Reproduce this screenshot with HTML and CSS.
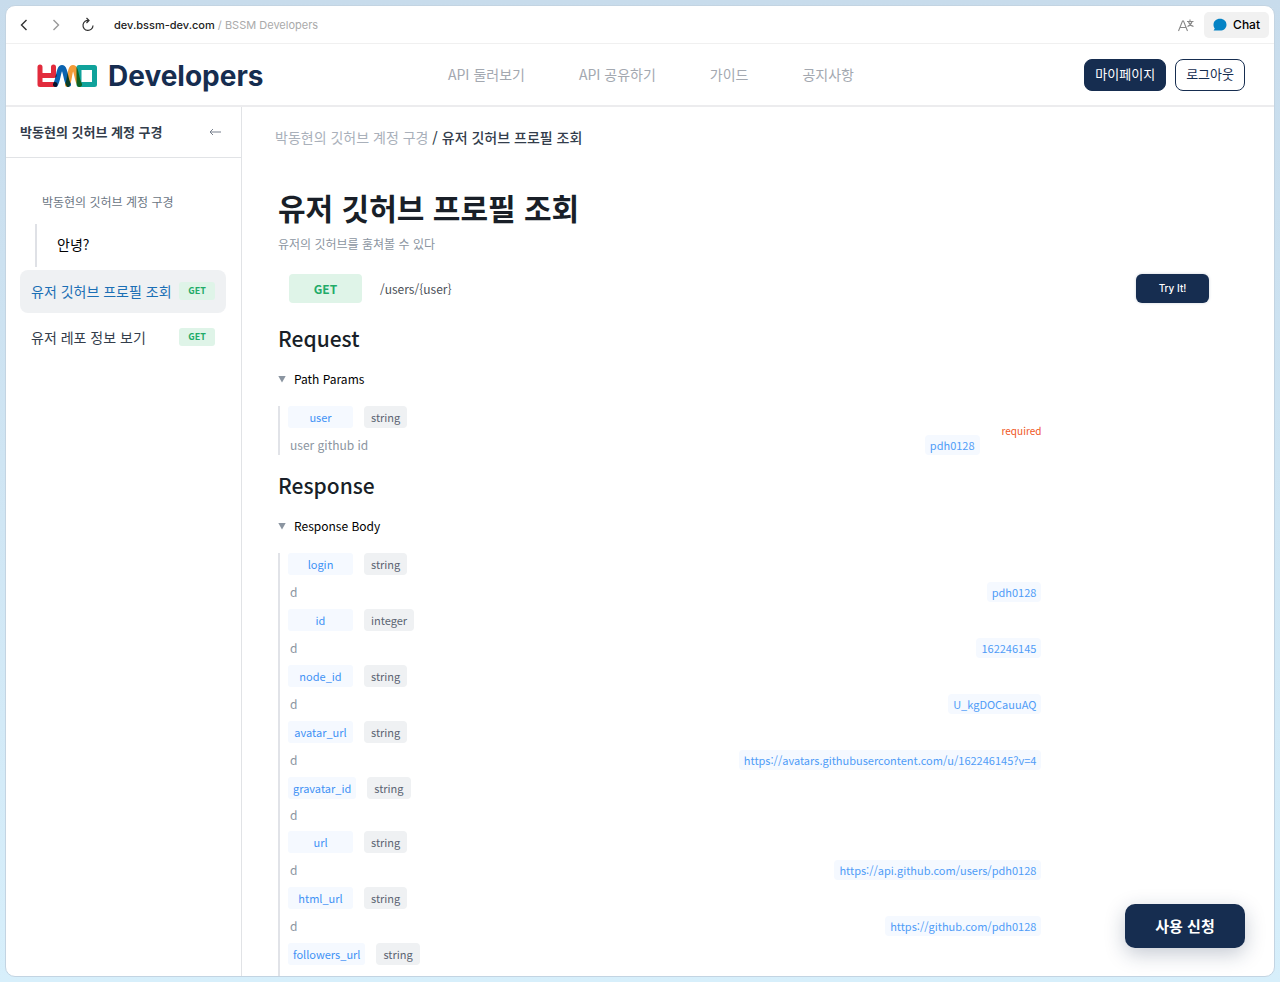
FILE: index.html
```html
<!DOCTYPE html>
<html lang="ko">
<head>
    <meta charset="UTF-8">
    <meta name="viewport" content="width=device-width, initial-scale=1.0">
    <title>BSSM Developers</title>
    <link rel="stylesheet" href="styles.css">
</head>
<body>
    <div class="window">
        <div class="browser-bar">
            <button class="icon-btn" aria-label="Back">
                <svg width="16" height="16" viewBox="0 0 16 16" stroke-width="1.4"><path d="M10.500 3L5.500 8l5 5" stroke="#333"/></svg>
            </button>
            <button class="icon-btn" aria-label="Forward">
                <svg width="16" height="16" viewBox="0 0 16 16" stroke-width="1.4"><path d="M5.500 3l5 5-5 5" stroke="#999"/></svg>
            </button>
            <button class="icon-btn" aria-label="Reload">
                <svg width="16" height="16" viewBox="0 0 16 16" stroke-width="1.2"><path d="M9 3.500A5 5 0 1 0 13 8.500M6.500 1l2.500 2.500L6.500 6" stroke="#333"/></svg>
            </button>
            <p class="address"><span class="host">dev.bssm-dev.com</span> / BSSM Developers</p>
            <button class="icon-btn translate" aria-label="Translate">
                <svg width="16" height="16" viewBox="0 0 16 16" stroke-width="1.1"><path d="M.5 14L4.500 4h1L9.500 14M2 10.500h6M9 4.500h6.500M12 2.500v2M9.500 9.500c2.500-1 4-3 4.500-5M10.500 4.500c.5 2 2.500 4 5 5" stroke="#888"/></svg>
            </button>
            <button class="chat-btn">
                <svg width="14" height="14" viewBox="0 0 14 14"><path d="M7 .8c3.800 0 6.500 2.500 6.500 5.900S10.800 12.600 7 12.600H.6l1.200-2C.9 9.500.5 8.200.5 6.700.5 3.300 3.200.8 7 .8z" fill="#0583c5"/></svg>
                Chat
            </button>
        </div>

        <header class="header">
            <a class="logo" href="#">
                <svg class="mark" width="60" height="24" viewBox="0 0 60 24" stroke-width="5" stroke-linejoin="round" stroke-linecap="round">
                    <path d="M3 3v17.500h15M3 11.500h14M16.500 3v8.500" stroke="#e22b3c"/>
                    <path d="M18.500 20.500C21.500 16 21.500 3.500 25 3.500s3.500 12.500 6.500 17" stroke="#0a63b0"/>
                    <path d="M30.500 20.500C33 16 32.500 3.500 36 3.500s3.500 12.500 6.500 17" stroke="#f29b38"/>
                    <path d="M42 3.500h15.500v17H42z" stroke="#10a29b"/>
                </svg>
                Developers
            </a>
            <nav class="menu">
                <a href="#">API 둘러보기</a>
                <a href="#">API 공유하기</a>
                <a href="#">가이드</a>
                <a href="#">공지사항</a>
            </nav>
            <div class="account">
                <button class="btn btn-dark">마이페이지</button>
                <button class="btn btn-line">로그아웃</button>
            </div>
        </header>

        <div class="body">
            <aside class="sidebar">
                <div class="sidebar-top">
                    <strong>박동현의 깃허브 계정 구경</strong>
                    <button class="fold" aria-label="접기">
                        <svg width="12" height="8" viewBox="0 0 12 8"><path d="M12 4H1M4 1L1 4l3 3" stroke="#777f8c"/></svg>
                    </button>
                </div>
                <div class="sidebar-list">
                    <p class="group">박동현의 깃허브 계정 구경</p>
                    <a class="child" href="#">안녕?</a>
                    <a class="item active" href="#">유저 깃허브 프로필 조회 <span class="method-sm">GET</span></a>
                    <a class="item" href="#">유저 레포 정보 보기 <span class="method-sm">GET</span></a>
                </div>
            </aside>

            <main class="content">
                <p class="crumbs"><a href="#">박동현의 깃허브 계정 구경</a> / 유저 깃허브 프로필 조회</p>

                <h1>유저 깃허브 프로필 조회</h1>
                <p class="summary">유저의 깃허브를 훔쳐볼 수 있다</p>

                <div class="endpoint">
                    <span class="method">GET</span>
                    <span class="path">/users/{user}</span>
                    <button class="try">Try It!</button>
                </div>

                <h2>Request</h2>
                <details open>
                    <summary>Path Params</summary>
                    <div class="params">
                        <div class="param">
                            <div class="info">
                                <div class="head"><span class="name">user</span><span class="type">string</span></div>
                                <div class="desc">user github id <span class="value">pdh0128</span></div>
                            </div>
                            <span class="required">required</span>
                        </div>
                    </div>
                </details>

                <h2>Response</h2>
                <details open>
                    <summary>Response Body</summary>
                    <div class="params">
                        <div class="param">
                            <div class="info">
                                <div class="head"><span class="name">login</span><span class="type">string</span></div>
                                <div class="desc">d <span class="value">pdh0128</span></div>
                            </div>
                        </div>
                        <div class="param">
                            <div class="info">
                                <div class="head"><span class="name">id</span><span class="type">integer</span></div>
                                <div class="desc">d <span class="value">162246145</span></div>
                            </div>
                        </div>
                        <div class="param">
                            <div class="info">
                                <div class="head"><span class="name">node_id</span><span class="type">string</span></div>
                                <div class="desc">d <span class="value">U_kgDOCauuAQ</span></div>
                            </div>
                        </div>
                        <div class="param">
                            <div class="info">
                                <div class="head"><span class="name">avatar_url</span><span class="type">string</span></div>
                                <div class="desc">d <span class="value">https://avatars.githubusercontent.com/u/162246145?v=4</span></div>
                            </div>
                        </div>
                        <div class="param">
                            <div class="info">
                                <div class="head"><span class="name">gravatar_id</span><span class="type">string</span></div>
                                <div class="desc">d</div>
                            </div>
                        </div>
                        <div class="param">
                            <div class="info">
                                <div class="head"><span class="name">url</span><span class="type">string</span></div>
                                <div class="desc">d <span class="value">https://api.github.com/users/pdh0128</span></div>
                            </div>
                        </div>
                        <div class="param">
                            <div class="info">
                                <div class="head"><span class="name">html_url</span><span class="type">string</span></div>
                                <div class="desc">d <span class="value">https://github.com/pdh0128</span></div>
                            </div>
                        </div>
                        <div class="param">
                            <div class="info">
                                <div class="head"><span class="name">followers_url</span><span class="type">string</span></div>
                            </div>
                        </div>
                    </div>
                </details>
            </main>
        </div>

        <button class="apply">사용 신청</button>
    </div>
</body>
</html>
```
FILE: styles.css
```css
*{
    box-sizing: border-box;
}

body{
    margin: 0;
    height: 100vh;
    padding: 5px;
    background: linear-gradient(#c8dcec, #d7effb);
    font-family: "Noto Sans CJK KR", sans-serif;
    font-size: 14px;
    line-height: 20px;
    color: #191f28;
}
p, h1, h2{
    margin: 0;
}
a{
    color: inherit;
    text-decoration: none;
}
button{
    border: 0;
    padding: 0;
    background: none;
    font: inherit;
    cursor: pointer;
}
svg{
    display: block;
    fill: none;
}

.window{
    position: relative;
    display: flex;
    flex-direction: column;
    height: 100%;
    border: 1px solid #c3d4e2;
    border-radius: 10px;
    background: #fff;
    overflow: hidden;
}

/* browser bar */
.browser-bar{
    display: flex;
    align-items: center;
    flex: none;
    height: 38px;
    padding: 0 5px 0 10px;
    gap: 16px;
    border-bottom: 1px solid #f0f0f0;
    font-family: Inter, sans-serif;
    font-size: 12px;
}
.address{
    flex: 1;
    color: #aaa;
    margin-left: 2px;
    font-size: 11px;
}
.host{
    color: #222;
    font-weight: 500;
}
.translate{
    margin-right: -6px;
}
.chat-btn{
    display: flex;
    align-items: center;
    gap: 6px;
    height: 26px;
    padding: 0 9px;
    border-radius: 5px;
    background: #f1f1f1;
    font-weight: 500;
}

/* header */
.header{
    display: grid;
    grid-template-columns: 1fr auto 1fr;
    align-items: center;
    flex: none;
    height: 63px;
    padding: 0 29px 0 31px;
    border-bottom: 2px solid #ececee;
}
.logo{
    display: flex;
    align-items: center;
    gap: 11px;
    padding-top: 2px;
    font-family: Inter, sans-serif;
    font-size: 28px;
    font-weight: 700;
    color: #162d50;
}
.mark{
    isolation: isolate;
}
.mark path{
    mix-blend-mode: multiply;
}
.menu{
    display: flex;
    gap: 54px;
    margin: 0 0 2px 20px;
    color: #a3a8b0;
}
.account{
    display: flex;
    justify-content: flex-end;
    gap: 9px;
}
.btn{
    height: 32px;
    padding: 0 10px 2px;
    border-radius: 8px;
    border: 1px solid #162d50;
    font-size: 13px;
}
.btn-dark{
    background: #162d50;
    color: #fff;
}
.btn-line{
    background: #fff;
    color: #162d50;
}

.body{
    display: flex;
    flex: 1;
    min-height: 0;
}

/* sidebar */
.sidebar{
    flex: none;
    width: 236px;
    border-right: 1px solid #e1e3e6;
}
.sidebar-top{
    display: flex;
    align-items: center;
    justify-content: space-between;
    height: 51px;
    padding: 0 20px 0 14px;
    border-bottom: 1px solid #e1e3e6;
    font-size: 13px;
    color: #333d4b;
}
.sidebar-list{
    display: flex;
    flex-direction: column;
    padding: 34px 15px 34px 14px;
}
.group{
    padding: 0 22px;
    font-size: 12px;
    color: #6b7684;
}
.child{
    margin: 12px 0 3px 15px;
    padding: 10px 20px 13px;
    border-left: 2px solid #dfe1e6;
    color: #000;
}
.item{
    display: flex;
    align-items: center;
    justify-content: space-between;
    height: 43px;
    margin-bottom: 3px;
    padding: 0 11px 1px;
    border-radius: 8px;
    color: #333d4b;
}
.item.active{
    background: #eff1f3;
    color: #1b6fb5;
}
.method-sm{
    width: 36px;
    border-radius: 3px;
    background: #dff4e8;
    color: #22ab68;
    font-size: 9px;
    line-height: 18px;
    font-weight: 700;
    text-align: center;
}

/* content */
.content{
    flex: 1;
    min-width: 0;
    padding: 20px 65px 0 36px;
    overflow: hidden;
}
.crumbs{
    margin: 0 -3px 38px;
    color: #333d4b;
    font-weight: 500;
}
.crumbs a{
    color: #a9b0ba;
    font-weight: 400;
}
h1{
    font-size: 30px;
    line-height: 44px;
    font-weight: 700;
}
.summary{
    margin-top: 5px;
    font-size: 12px;
    color: #8b95a1;
}
.endpoint{
    display: flex;
    align-items: center;
    gap: 18px;
    margin: 20px 0 19px 11px;
}
.method{
    width: 73px;
    border-radius: 4px;
    background: #dff4e8;
    color: #22ab68;
    font-size: 12px;
    line-height: 29px;
    font-weight: 700;
    text-align: center;
}
.path{
    flex: 1;
    font-size: 12px;
    color: #4b5058;
}
.try{
    width: 73px;
    height: 29px;
    padding-bottom: 1px;
    border-radius: 6px;
    background: #162d50;
    color: #fff;
    font-family: Inter, sans-serif;
    font-size: 10px;
    font-weight: 500;
    box-shadow: 0 0 3px #ccd2da;
}
h2{
    font-size: 21px;
    line-height: 32px;
    font-weight: 500;
}
summary{
    display: flex;
    align-items: center;
    gap: 8px;
    margin: 15px 0 17px;
    font-size: 12px;
    color: #000;
    cursor: pointer;
}
summary::before{
    content: "";
    width: 8px;
    height: 7px;
    background: #8b95a1;
    clip-path: polygon(0 0, 100% 0, 50% 100%);
}
.params{
    display: flex;
    flex-direction: column;
    gap: 7px;
    width: 82%;
    margin-bottom: 14px;
    padding-left: 8px;
    border-left: 2px solid #e1e3e8;
}
.param{
    display: flex;
    align-items: center;
    min-height: 47px;
    gap: 22px;
}
.info{
    flex: 1;
}
.head{
    display: flex;
    align-items: center;
    gap: 11px;
    margin-bottom: 7px;
    font-size: 11px;
    line-height: 22px;
}
.param:last-child{
    align-items: flex-start;
}
.name{
    min-width: 65px;
    padding: 0 5px;
    border-radius: 3px;
    background: #f5f9ff;
    color: #3f92f5;
    text-align: center;
}
.type{
    padding: 0 7px;
    border-radius: 4px;
    background: #eff1f3;
    color: #5b6472;
}
.desc{
    display: flex;
    align-items: center;
    justify-content: space-between;
    padding-left: 2px;
    font-size: 12px;
    line-height: 18px;
    color: #8b95a1;
}
.value{
    padding: 0 5px;
    border-radius: 4px;
    background: #f5f9ff;
    font-size: 11px;
    line-height: 20px;
    color: #4f9cf7;
}
.required{
    align-self: center;
    font-size: 10px;
    color: #f0561d;
}

.apply{
    position: absolute;
    right: 29px;
    bottom: 28px;
    width: 120px;
    height: 44px;
    border-radius: 10px;
    background: #162d50;
    color: #fff;
    font-size: 15px;
    font-weight: 700;
    box-shadow: 0 6px 20px rgba(22, 45, 80, .25);
}
```
